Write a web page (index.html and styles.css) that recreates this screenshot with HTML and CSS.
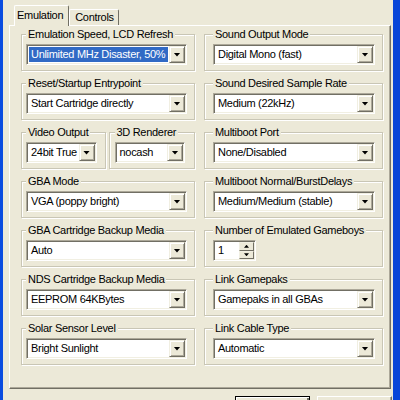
FILE: index.html
```html
<!DOCTYPE html>
<html lang="en">
<head>
  <meta charset="UTF-8">
  <title>Emulation Setup</title>
  <link rel="stylesheet" href="styles.css">
</head>
<body>
  <div class="window">
    <div class="tabs">
      <div class="tab active">Emulation</div>
      <div class="tab">Controls</div>
    </div>

    <div class="panel">
      <div class="col left">
        <fieldset class="group">
          <legend>Emulation Speed, LCD Refresh</legend>
          <div class="combo"><span class="value selected">Unlimited MHz Disaster, 50%</span><span class="drop"></span></div>
        </fieldset>

        <fieldset class="group">
          <legend>Reset/Startup Entrypoint</legend>
          <div class="combo"><span class="value">Start Cartridge directly</span><span class="drop"></span></div>
        </fieldset>

        <div class="pair">
          <fieldset class="group video">
            <legend>Video Output</legend>
            <div class="combo"><span class="value">24bit True</span><span class="drop"></span></div>
          </fieldset>
          <fieldset class="group renderer">
            <legend>3D Renderer</legend>
            <div class="combo"><span class="value">nocash</span><span class="drop"></span></div>
          </fieldset>
        </div>

        <fieldset class="group">
          <legend>GBA Mode</legend>
          <div class="combo"><span class="value">VGA (poppy bright)</span><span class="drop"></span></div>
        </fieldset>

        <fieldset class="group">
          <legend>GBA Cartridge Backup Media</legend>
          <div class="combo"><span class="value">Auto</span><span class="drop"></span></div>
        </fieldset>

        <fieldset class="group">
          <legend>NDS Cartridge Backup Media</legend>
          <div class="combo"><span class="value">EEPROM 64KBytes</span><span class="drop"></span></div>
        </fieldset>

        <fieldset class="group">
          <legend>Solar Sensor Level</legend>
          <div class="combo"><span class="value">Bright Sunlight</span><span class="drop"></span></div>
        </fieldset>
      </div>

      <div class="col right">
        <fieldset class="group">
          <legend>Sound Output Mode</legend>
          <div class="combo"><span class="value">Digital Mono (fast)</span><span class="drop"></span></div>
        </fieldset>

        <fieldset class="group">
          <legend>Sound Desired Sample Rate</legend>
          <div class="combo"><span class="value">Medium (22kHz)</span><span class="drop"></span></div>
        </fieldset>

        <fieldset class="group">
          <legend>Multiboot Port</legend>
          <div class="combo"><span class="value">None/Disabled</span><span class="drop"></span></div>
        </fieldset>

        <fieldset class="group">
          <legend>Multiboot Normal/BurstDelays</legend>
          <div class="combo"><span class="value">Medium/Medium (stable)</span><span class="drop"></span></div>
        </fieldset>

        <fieldset class="group">
          <legend>Number of Emulated Gameboys</legend>
          <div class="combo spin">
            <span class="value">1</span>
            <span class="arrows"><span class="arrow up"></span><span class="arrow down"></span></span>
          </div>
        </fieldset>

        <fieldset class="group">
          <legend>Link Gamepaks</legend>
          <div class="combo"><span class="value">Gamepaks in all GBAs</span><span class="drop"></span></div>
        </fieldset>

        <fieldset class="group">
          <legend>Link Cable Type</legend>
          <div class="combo"><span class="value">Automatic</span><span class="drop"></span></div>
        </fieldset>
      </div>
    </div>

    <!-- only the top edge of the dialog buttons is in view -->
    <div class="buttons">
      <button class="btn default" aria-label="OK"></button>
      <button class="btn" aria-label="Cancel"></button>
    </div>
  </div>
</body>
</html>
```

FILE: styles.css
```css
body {
  margin: 0;
  background: #ece9d8;
  font-family: 'Liberation Sans', Arial, sans-serif;
  font-size: 11px;
  letter-spacing: -0.3px;
  color: #000;
  overflow: hidden;
}

.window {
  height: 400px;
  box-sizing: border-box;
  border-left: 3px solid #0a4ce0;
  border-right: 7px solid #0845d8;
  padding-top: 6px;
}

/* tabs */

.tabs {
  display: flex;
  align-items: flex-end;
  height: 19px;
  margin-left: 11px;
}

.tab {
  height: 15px;
  line-height: 15px;
  padding: 0 4px 0 5px;
  border: 1px solid;
  border-color: #fff #716f64 transparent #fff;
  border-bottom: none;
  border-radius: 2px 2px 0 0;
  background: #ece9d8;
}

.tab.active {
  height: 20px;
  line-height: 19px;
  padding: 0 5px 0 2px;
  margin-bottom: -1px;
  position: relative;
  z-index: 1;
}

/* page */

.panel {
  width: 382px;
  height: 364px;
  margin-left: 6px;
  box-sizing: border-box;
  border: 1px solid;
  border-color: #fff #716f64 #716f64 #fff;
  box-shadow: inset -1px -1px #aca899;
  padding: 2px 0 0 11px;
  display: grid;
  grid-template-columns: 174px 179px;
  column-gap: 9px;
  align-content: start;
}

.col {
  display: flex;
  flex-direction: column;
  gap: 6px;
}

.group {
  margin: 0;
  min-width: 0;
  padding: 4px 7px 5px 4px;
  border: 1px solid #c9c6b5;
  box-shadow: inset 1px 1px #fff, 1px 1px #fff;
}

.right .group {
  padding-left: 8px;
}

.group legend {
  padding: 0 2px;
  line-height: 12px;
  background: #ece9d8;
  white-space: nowrap;
}

.pair {
  display: flex;
  gap: 3px;
}

.pair .group {
  flex: 1;
}

.group.video {
  padding-right: 8px;
}

.group.renderer {
  padding: 4px 9px 5px 5px;
}

/* combo boxes */

.combo {
  display: flex;
  align-items: center;
  height: 21px;
  box-sizing: border-box;
  padding: 1px;
  background: #fff;
  border: 1px solid;
  border-color: #aca899 #fff #fff #aca899;
  box-shadow: inset 1px 1px #716f64, inset -1px -1px #f1efe2;
}

.value {
  flex: 1;
  min-width: 0;
  margin: 0 1px;
  padding-left: 2px;
  line-height: 15px;
  white-space: nowrap;
  overflow: hidden;
}

.value.selected {
  background: #316ac5;
  color: #fff;
}

.drop {
  width: 16px;
  height: 17px;
  flex: none;
  box-sizing: border-box;
  background: #ece9d8;
  border: 1px solid;
  border-color: #f1efe2 #716f64 #716f64 #f1efe2;
  box-shadow: inset 1px 1px #fff, inset -1px -1px #aca899;
  display: flex;
  align-items: center;
  justify-content: center;
}

.drop::before {
  content: '';
  width: 7px;
  height: 4px;
  background: #000;
  clip-path: polygon(0 0, 100% 0, 50% 100%);
}

/* spinner */

.spin {
  width: 43px;
}

.arrows {
  display: flex;
  flex-direction: column;
  width: 15px;
  height: 17px;
  flex: none;
}

.arrow {
  flex: 1;
  box-sizing: border-box;
  background: #ece9d8;
  border: 1px solid;
  border-color: #f1efe2 #716f64 #716f64 #f1efe2;
  display: flex;
  align-items: center;
  justify-content: center;
}

.arrow::before {
  content: '';
  width: 5px;
  height: 3px;
  background: #000;
}

.arrow.up::before {
  clip-path: polygon(50% 0, 100% 100%, 0 100%);
}

.arrow.down::before {
  clip-path: polygon(0 0, 100% 0, 50% 100%);
}

/* dialog buttons */

.buttons {
  display: flex;
  gap: 7px;
  margin: 7px 0 0 232px;
}

.btn {
  width: 75px;
  height: 23px;
  font: inherit;
  background: #ece9d8;
  border: 1px solid;
  border-color: #fff #716f64 #716f64 #fff;
  box-shadow: inset -1px -1px #aca899;
}

.btn.default {
  border-color: #000;
  box-shadow: inset 1px 1px #fff, inset -2px -2px #716f64;
}
```
